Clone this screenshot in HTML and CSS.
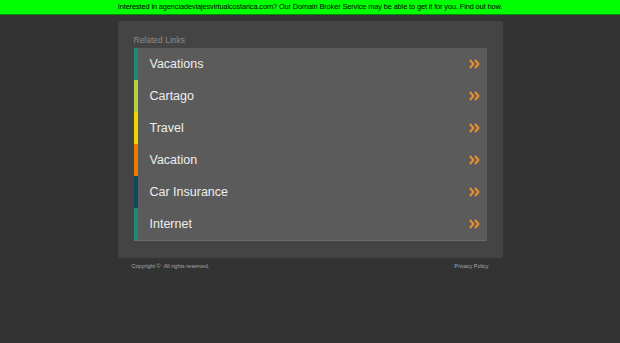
FILE: index.html
```html
<!DOCTYPE html>
<html lang="en">
<head>
    <meta charset="UTF-8">
    <meta name="viewport" content="width=device-width, initial-scale=1.0">
    <title>agenciadeviajesvirtualcostarica.com</title>
    <link rel="stylesheet" href="styles.css">
</head>
<body>

<div class="topbar">
    Interested in agenciadeviajesvirtualcostarica.com? Our Domain Broker Service may be able to get it for you. Find out how.
</div>

<div class="container">
    <div class="panel">
        <div class="panel-title">Related Links</div>
        <ul class="links">
            <li class="c1"><a href="#">Vacations</a><svg class="arrow" viewBox="0 0 12 10"><path d="M1 1l3.5 4L1 9M6 1l3.5 4L6 9"/></svg></li>
            <li class="c2"><a href="#">Cartago</a><svg class="arrow" viewBox="0 0 12 10"><path d="M1 1l3.5 4L1 9M6 1l3.5 4L6 9"/></svg></li>
            <li class="c3"><a href="#">Travel</a><svg class="arrow" viewBox="0 0 12 10"><path d="M1 1l3.5 4L1 9M6 1l3.5 4L6 9"/></svg></li>
            <li class="c4"><a href="#">Vacation</a><svg class="arrow" viewBox="0 0 12 10"><path d="M1 1l3.5 4L1 9M6 1l3.5 4L6 9"/></svg></li>
            <li class="c5"><a href="#">Car Insurance</a><svg class="arrow" viewBox="0 0 12 10"><path d="M1 1l3.5 4L1 9M6 1l3.5 4L6 9"/></svg></li>
            <li class="c1"><a href="#">Internet</a><svg class="arrow" viewBox="0 0 12 10"><path d="M1 1l3.5 4L1 9M6 1l3.5 4L6 9"/></svg></li>
        </ul>
    </div>
    <div class="footer">
        <span>Copyright &copy; &nbsp;All rights reserved.</span>
        <a href="#">Privacy Policy</a>
    </div>
</div>

</body>
</html>
```

FILE: styles.css
```css
body {
    font-family: "Liberation Sans", Arial, sans-serif;
    background-color: #333333;
    margin: 0;
}
.topbar {
    background: #00ff00;
    border-bottom: 1px solid #0a8a0a;
    color: #000;
    font-size: 7.4px;
    height: 14px;
    line-height: 14px;
    text-align: center;
    letter-spacing: -0.12px;
}
.container {
    width: 385px;
    margin: 6px auto 0;
}
.panel {
    background: #444444;
    border-radius: 2px;
    padding: 13px 16px 17px;
}
.panel-title {
    color: #8a8a8a;
    font-size: 8.5px;
    line-height: 12px;
    margin-bottom: 2px;
}
.links {
    list-style: none;
    margin: 0;
    padding: 0;
    border-bottom: 1px solid #666c70;
}
.links li {
    display: flex;
    align-items: center;
    justify-content: space-between;
    height: 32px;
    background: #5b5b5b;
    border-left: 4px solid #1f8a70;
    padding: 0 6px 0 12px;
}
.links li.c2 { border-left-color: #b9d03a; }
.links li.c3 { border-left-color: #f4d400; }
.links li.c4 { border-left-color: #ee7a00; }
.links li.c5 { border-left-color: #0c4a5d; }
.links a {
    color: #eeeeee;
    font-size: 12.5px;
    text-decoration: none;
}
.arrow {
    width: 12px;
    height: 10px;
    fill: none;
    stroke: #e8902a;
    stroke-width: 2;
}
.footer {
    display: flex;
    justify-content: space-between;
    padding: 5px 14px 0 14px;
    font-size: 5.5px;
    color: #a8a8a8;
}
.footer a {
    color: #a8a8a8;
    text-decoration: none;
}
```
